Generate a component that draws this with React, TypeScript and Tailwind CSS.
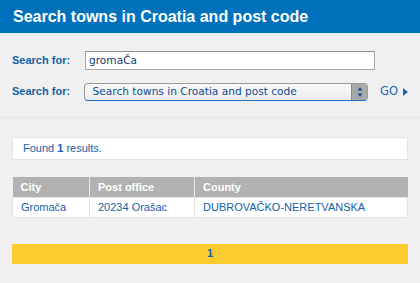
export default function App() {
  return (
    <div className="w-[420px] h-[283px] bg-[#f0f0f0] font-['Liberation_Sans',Arial,sans-serif] overflow-hidden">
      <div className="h-[33px] bg-[#0171bb] flex items-center px-[13px]">
        <h1 className="text-white font-bold text-[16px]">
          Search towns in Croatia and post code
        </h1>
      </div>

      <div className="px-[12px] pt-[18px] border-b border-[#e6e6e6] pb-[16px]">
        <div className="flex items-center h-[19px]">
          <label className="w-[73px] text-[11px] font-bold text-[#1562a8]">Search for:</label>
          <div className="w-[290px] h-[19px] bg-white border border-[#a9a9a9] border-t-[#8f8f8f] flex items-center px-[3px] font-['DejaVu_Sans',sans-serif] text-[10.6px] text-[#1b3b6b]">
            gromaČa
          </div>
        </div>
        <div className="flex items-center h-[19px] mt-[12px]">
          <label className="w-[73px] text-[11px] font-bold text-[#1562a8]">Search for:</label>
          <div className="w-[290px] h-[18px] bg-gradient-to-b from-[#fafafa] to-[#ececec] border border-[#9a9a9a] rounded-[4px] border-b-[#1a6fc0] flex items-center font-['DejaVu_Sans',sans-serif] text-[10.6px] text-[#0d4d96] overflow-hidden">
            <span className="flex-1 pl-[8px] whitespace-nowrap">Search towns in Croatia and post code</span>
            <span className="w-[16px] h-full bg-[#a9a9a9] border-l border-[#8a8a8a] flex flex-col items-center justify-center">
              <svg width="6" height="12" viewBox="0 0 6 12">
                <path d="M3 1 L5.5 4.5 L0.5 4.5 Z" fill="#1c4f9a" />
                <path d="M3 11 L5.5 7.5 L0.5 7.5 Z" fill="#1c4f9a" />
              </svg>
            </span>
          </div>
          <span className="ml-[12px] flex items-center gap-[5px] text-[11.5px] text-[#1368b6] font-['DejaVu_Sans',sans-serif]">
            GO
            <svg width="5" height="8" viewBox="0 0 5 8">
              <path d="M0 0 L5 4 L0 8 Z" fill="#1368b6" />
            </svg>
          </span>
        </div>
      </div>

      <div className="px-[12px] pt-[19px]">
        <div className="h-[23px] bg-white border border-[#e4e4e4] flex items-center px-[10px] text-[11px] text-[#1562a8]">
          <span>
            Found <b>1</b> results.
          </span>
        </div>

        <table className="w-full mt-[17px] border-collapse text-[11px]">
          <thead>
            <tr className="bg-[#b2b2b2] text-white h-[20px]">
              <th className="w-[77px] text-left px-[8px] font-bold border-r border-[#e8e8e8]">City</th>
              <th className="w-[105px] text-left px-[8px] font-bold border-r border-[#e8e8e8]">Post office</th>
              <th className="text-left px-[8px] font-bold">County</th>
            </tr>
          </thead>
          <tbody>
            <tr className="bg-white text-[#1562a8] h-[20px]">
              <td className="px-[8px] border border-[#e4e4e4]">Gromača</td>
              <td className="px-[8px] border border-[#e4e4e4]">20234 Orašac</td>
              <td className="px-[8px] border border-[#e4e4e4]">DUBROVAČKO-NERETVANSKA</td>
            </tr>
          </tbody>
        </table>

        <div className="mt-[26px] h-[20px] bg-[#fdca2f] flex items-center justify-center text-[11px] font-bold text-[#1562a8]">
          1
        </div>
      </div>
    </div>
  );
}
